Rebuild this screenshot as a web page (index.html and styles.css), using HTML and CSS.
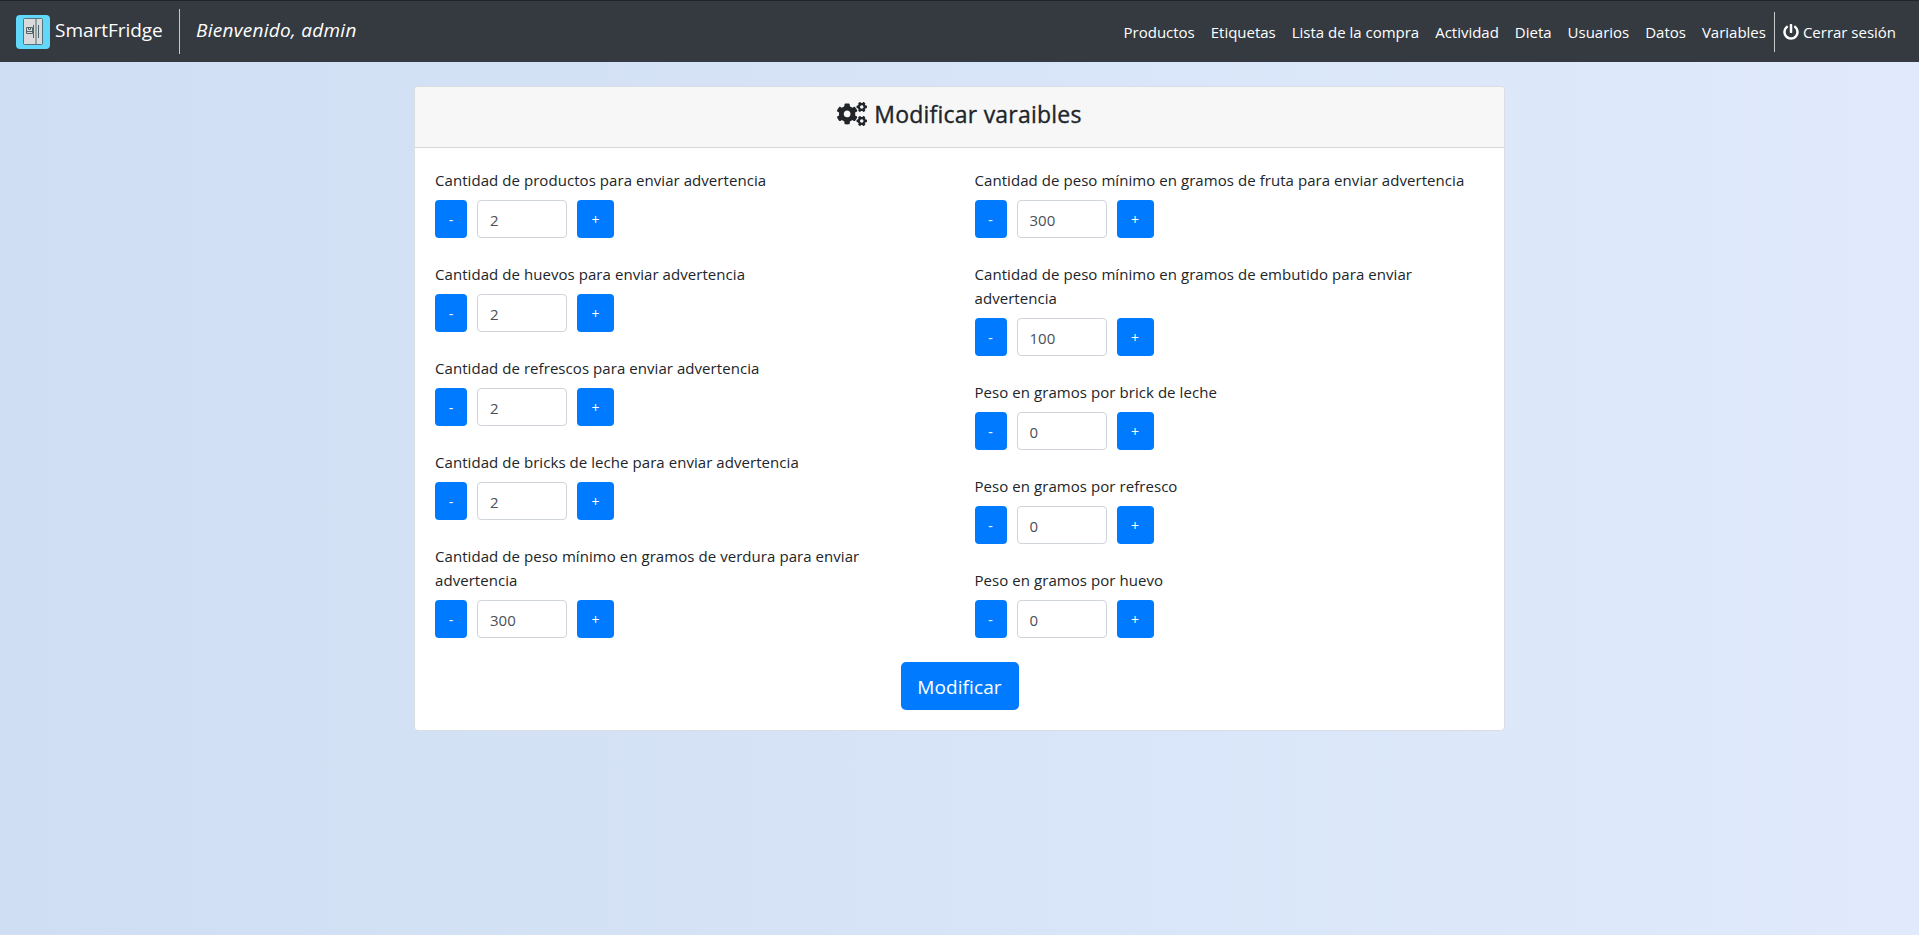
FILE: index.html
```html
<!DOCTYPE html>
<html lang="es">
<head>
<meta charset="utf-8">
<title>SmartFridge</title>
<link rel="stylesheet" href="styles.css">
</head>
<body>
<nav class="navbar">
  <a class="brand">
    <svg class="logo" viewBox="0 0 34 34">
      <rect width="34" height="34" rx="4" fill="#61d8fa"/>
      <rect x="7.5" y="3.5" width="19" height="26" rx="1" fill="#dadada" stroke="#53747b"/>
      <path d="M20 4v25" stroke="#8ca3a8" stroke-width="2"/>
      <path d="M10.5 12.5h6v6h-6zM10.5 16.5h6M12.5 12.5v2h2v-2M17.5 10v13M22.5 10v13" fill="none" stroke="#53656b"/>
    </svg>
    <span class="brand-name">SmartFridge</span>
  </a>
  <em class="welcome"><span class="welcome-text">Bienvenido, admin</span></em>
  <ul class="menu">
    <li class="item">Productos</li>
    <li class="item">Etiquetas</li>
    <li class="item">Lista de la compra</li>
    <li class="item">Actividad</li>
    <li class="item">Dieta</li>
    <li class="item">Usuarios</li>
    <li class="item">Datos</li>
    <li class="item">Variables</li>
    <li class="item logout"><svg class="power" viewBox="0 0 512 512"><path fill="currentColor" d="M400 54.1c63 45 104 118.6 104 201.9 0 136.8-110.8 247.7-247.5 248C120 504.3 8.2 393 8 256.4 7.9 173.1 48.9 99.3 111.8 54.2c11.7-8.3 28-4.8 35 7.7L162.6 90c5.9 10.5 3.1 23.8-6.6 31-41.5 30.8-68 79.6-68 134.9-.1 92.3 74.5 168.1 168 168.1 91.6 0 168.6-74.2 168-169.1-.3-51.8-24.7-101.8-68.1-134-9.7-7.2-12.4-20.5-6.5-30.9l15.8-28.1c7-12.4 23.2-16.1 34.8-7.8zM296 264V24c0-13.3-10.7-24-24-24h-32c-13.3 0-24 10.7-24 24v240c0 13.3 10.7 24 24 24h32c13.3 0 24-10.7 24-24z"/></svg><span>Cerrar sesión</span></li>
  </ul>
</nav>
<main class="card">
  <header class="card-header">
    <svg class="cogs" viewBox="0 0 640 512" fill="currentColor">
      <path id="small-cog" d="M512.1 191l-8.2 14.3c-3 5.3-9.4 7.5-15.1 5.4-11.8-4.4-22.6-10.7-32.1-18.6-4.6-3.8-5.8-10.5-2.8-15.7l8.2-14.3c-6.9-8-12.3-17.3-15.9-27.4h-16.5c-6 0-11.2-4.3-12.2-10.3-2-12-2.1-24.6 0-37.1 1-6 6.2-10.4 12.2-10.4h16.5c3.6-10.1 9-19.4 15.9-27.4l-8.2-14.3c-3-5.2-1.9-11.9 2.8-15.7 9.5-7.9 20.4-14.2 32.1-18.6 5.7-2.1 12.1.1 15.1 5.4l8.2 14.3c10.5-1.9 21.2-1.9 31.7 0L552 6.3c3-5.3 9.4-7.5 15.1-5.4 11.8 4.4 22.6 10.7 32.1 18.6 4.6 3.8 5.8 10.5 2.8 15.7l-8.2 14.3c6.9 8 12.3 17.3 15.9 27.4h16.5c6 0 11.2 4.3 12.2 10.3 2 12 2.1 24.6 0 37.1-1 6-6.2 10.4-12.2 10.4h-16.5c-3.6 10.1-9 19.4-15.9 27.4l8.2 14.3c3 5.2 1.9 11.9-2.8 15.7-9.5 7.9-20.4 14.2-32.1 18.6-5.7 2.1-12.1-.1-15.1-5.4l-8.2-14.3c-10.4 1.9-21.2 1.9-31.7 0zm-10.5-58.8c38.5 29.6 82.4-14.3 52.8-52.8-38.5-29.7-82.4 14.3-52.8 52.8z"/>
      <use href="#small-cog" y="299"/>
      <path d="M386.3 286.1l33.7 16.8c10.1 5.8 14.5 18.1 10.5 29.1-8.9 24.2-26.4 46.4-42.6 65.8-7.4 8.9-20.2 11.1-30.3 5.3l-29.1-16.8c-16 13.7-34.6 24.6-54.9 31.7v33.6c0 11.6-8.3 21.6-19.7 23.6-24.6 4.2-50.4 4.4-75.9 0-11.5-2-20-11.9-20-23.6V418c-20.3-7.2-38.9-18-54.9-31.7L74 403c-10 5.8-22.9 3.6-30.3-5.3-16.2-19.4-33.3-41.6-42.2-65.7-4-10.9.4-23.2 10.5-29.1l33.3-16.8c-3.9-20.9-3.9-42.4 0-63.4L12 205.8c-10.1-5.8-14.6-18.1-10.5-29 8.9-24.2 26-46.4 42.2-65.8 7.4-8.9 20.2-11.1 30.3-5.3l29.1 16.8c16-13.7 34.6-24.6 54.9-31.7V57.1c0-11.5 8.2-21.5 19.6-23.5 24.6-4.2 50.5-4.4 76-.1 11.5 2 20 11.9 20 23.6v33.6c20.3 7.2 38.9 18 54.9 31.7l29.1-16.8c10-5.8 22.9-3.6 30.3 5.3 16.2 19.4 33.2 41.6 42.1 65.8 4 10.9.1 23.2-10 29.1l-33.7 16.8c3.9 21 3.9 42.5 0 63.5zm-117.6 21.1c59.2-77-28.7-164.9-105.7-105.7-59.2 77 28.7 164.9 105.7 105.7z"/>
    </svg>
    <h4 class="title">Modificar varaibles</h4>
  </header>
  <form class="card-body">
    <div class="columns">
      <div class="column">
        <div class="field"><label class="label">Cantidad de productos para enviar advertencia</label><div class="stepper"><button type="button" class="btn minus">-</button><input class="value" value="2"><button type="button" class="btn plus">+</button></div></div>
        <div class="field"><label class="label">Cantidad de huevos para enviar advertencia</label><div class="stepper"><button type="button" class="btn minus">-</button><input class="value" value="2"><button type="button" class="btn plus">+</button></div></div>
        <div class="field"><label class="label">Cantidad de refrescos para enviar advertencia</label><div class="stepper"><button type="button" class="btn minus">-</button><input class="value" value="2"><button type="button" class="btn plus">+</button></div></div>
        <div class="field"><label class="label">Cantidad de bricks de leche para enviar advertencia</label><div class="stepper"><button type="button" class="btn minus">-</button><input class="value" value="2"><button type="button" class="btn plus">+</button></div></div>
        <div class="field"><label class="label">Cantidad de peso mínimo en gramos de verdura para enviar<br>advertencia</label><div class="stepper"><button type="button" class="btn minus">-</button><input class="value" value="300"><button type="button" class="btn plus">+</button></div></div>
      </div>
      <div class="column">
        <div class="field"><label class="label">Cantidad de peso mínimo en gramos de fruta para enviar advertencia</label><div class="stepper"><button type="button" class="btn minus">-</button><input class="value" value="300"><button type="button" class="btn plus">+</button></div></div>
        <div class="field"><label class="label">Cantidad de peso mínimo en gramos de embutido para enviar<br>advertencia</label><div class="stepper"><button type="button" class="btn minus">-</button><input class="value" value="100"><button type="button" class="btn plus">+</button></div></div>
        <div class="field"><label class="label">Peso en gramos por brick de leche</label><div class="stepper"><button type="button" class="btn minus">-</button><input class="value" value="0"><button type="button" class="btn plus">+</button></div></div>
        <div class="field"><label class="label">Peso en gramos por refresco</label><div class="stepper"><button type="button" class="btn minus">-</button><input class="value" value="0"><button type="button" class="btn plus">+</button></div></div>
        <div class="field"><label class="label">Peso en gramos por huevo</label><div class="stepper"><button type="button" class="btn minus">-</button><input class="value" value="0"><button type="button" class="btn plus">+</button></div></div>
      </div>
    </div>
    <button type="button" class="btn submit">Modificar</button>
  </form>
</main>
</body>
</html>
```
FILE: styles.css
```css
* { box-sizing: border-box; }
body {
  margin: 0;
  min-height: 100vh;
  background: linear-gradient(to right, #cfdef3, #e0eafc);
  color: #212529;
  font: 15px/24px "Open Sans", "Noto Sans", sans-serif;
}
.navbar {
  display: flex;
  align-items: center;
  height: 62px;
  padding: 0 15px 0 16px;
  background: #343a40;
  border-top: 1px solid #222427;
  color: #fff;
}
.brand { display: flex; align-items: center; gap: 5px; width: 163px; }
.logo { width: 34px; height: 34px; }
.brand-name { padding-bottom: 4px; font-size: 19px; letter-spacing: -0.03px; }
.welcome {
  display: flex;
  align-items: center;
  height: 45px;
  padding: 0 0 4px 16px;
  border-left: 1px solid #c6c8ca;
  font-size: 19px;
  letter-spacing: 0.28px;
}
.menu { display: flex; align-items: center; margin: 0 0 0 auto; padding: 0; list-style: none; }
.item { padding: 0 8px; white-space: nowrap; letter-spacing: -0.01px; }
.logout {
  display: flex;
  align-items: center;
  gap: 4px;
  height: 40px;
  border-left: 1px solid #c6c8ca;
}
.power { width: 16px; height: 16px; }
.card {
  width: 1091px;
  margin: 24px auto 0;
  background: #fff;
  border: 1px solid #dadde1;
  border-radius: 4px;
}
.card-header {
  display: flex;
  justify-content: center;
  gap: 7px;
  height: 61px;
  padding-top: 12px;
  background: #f7f7f7;
  border-bottom: 1px solid #d9d9d9;
  border-radius: 3px 3px 0 0;
}
.cogs { width: 30px; height: 24px; margin-top: 3px; }
.title {
  margin: 1px 0 0;
  font-size: 23px;
  font-weight: 500;
  line-height: 29px;
  letter-spacing: 0.22px;
  -webkit-text-stroke: 0.35px currentColor;
}
.card-body { padding: 20px; }
.columns { display: grid; grid-template-columns: 1fr 1fr; gap: 30px; }
.field { margin-bottom: 24px; }
.label { display: block; margin-bottom: 8px; white-space: nowrap; letter-spacing: 0.06px; }
.stepper { display: flex; gap: 10px; }
.btn {
  height: 38px;
  padding: 0;
  border: 0;
  border-radius: 4px;
  background: #007bff;
  color: #fff;
  font: inherit;
}
.minus { width: 32px; padding-top: 2px; font-size: 14px; }
.plus { width: 37px; padding-top: 2px; font-size: 14px; }
.value {
  width: 90px;
  height: 38px;
  padding: 1px 12px 0;
  border: 1px solid #ced4da;
  border-radius: 4px;
  color: #495057;
  font: inherit;
}
.submit { display: block; width: 118px; height: 48px; margin: 0 auto; padding-top: 1px; border-radius: 5px; font-size: 19px; letter-spacing: 0.1px; }
```
